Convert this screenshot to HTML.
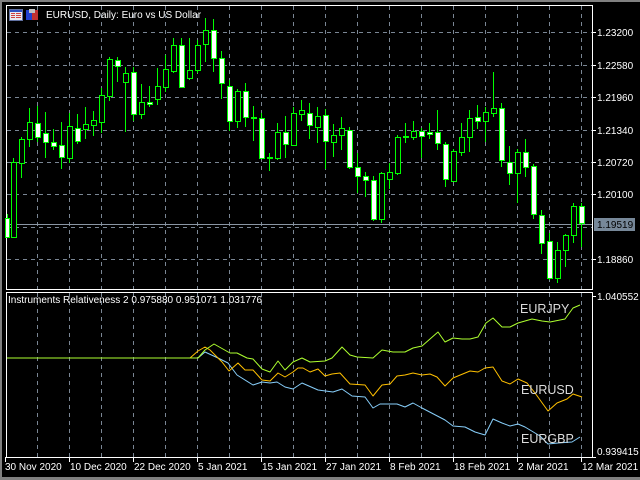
<!DOCTYPE html>
<html><head><meta charset="utf-8"><style>
html,body{margin:0;padding:0;background:#000;width:640px;height:480px;overflow:hidden}
svg{display:block}
text{font-family:"Liberation Sans",sans-serif;font-size:10px;fill:#fff}
</style></head><body>
<svg width="640" height="480" viewBox="0 0 640 480" xmlns="http://www.w3.org/2000/svg" shape-rendering="crispEdges">
<rect x="0" y="0" width="640" height="480" fill="#000"/>
<rect x="0" y="0" width="640" height="2" fill="#808080"/>
<rect x="0" y="0" width="2" height="480" fill="#808080"/>
<rect x="0" y="477" width="640" height="3" fill="#808080"/>
<g stroke="#7a8694" stroke-width="1" stroke-dasharray="4,4">
<path d="M37.5 6V289M69.5 6V289M101.5 6V289M133.5 6V289M165.5 6V289M197.5 6V289M229.5 6V289M261.5 6V289M293.5 6V289M325.5 6V289M357.5 6V289M389.5 6V289M421.5 6V289M453.5 6V289M485.5 6V289M517.5 6V289M549.5 6V289M581.5 6V289"/>
<path d="M37.5 293V457M69.5 293V457M101.5 293V457M133.5 293V457M165.5 293V457M197.5 293V457M229.5 293V457M261.5 293V457M293.5 293V457M325.5 293V457M357.5 293V457M389.5 293V457M421.5 293V457M453.5 293V457M485.5 293V457M517.5 293V457M549.5 293V457M581.5 293V457"/>
<path d="M7 32.5H592M7 65.5H592M7 97.5H592M7 130.5H592M7 162.5H592M7 194.5H592M7 227.5H592M7 259.5H592"/>
</g>
<path d="M7 224.5H592" stroke="#8a96a4" stroke-width="1"/>
<g stroke="#fff" stroke-width="1" fill="none">
<path d="M6.5 5.5H592.5V289.5H6.5Z"/>
<path d="M6.5 292.5H592.5V457.5H6.5Z"/>
<path d="M592 32.5h4M592 65.5h4M592 97.5h4M592 130.5h4M592 162.5h4M592 194.5h4M592 259.5h4M592 296.5h4"/>
<path d="M5.5 457V462M69.5 457V462M133.5 457V462M197.5 457V462M261.5 457V462M325.5 457V462M389.5 457V462M453.5 457V462M517.5 457V462M581.5 457V462"/>
<path d="M592.5 450V457.5H596"/>
</g>
<g stroke="#00ff00" stroke-width="1" shape-rendering="crispEdges">
<g fill="#000">
<path d="M13.5 158V238M21.5 137V178M29.5 108V147M69.5 113V163M85.5 107V139M93.5 111V136M101.5 88V133M109.5 57V101M125.5 67V132M141.5 84V119M157.5 68V105M165.5 55V92M173.5 38V73M189.5 38V80M197.5 40V73M205.5 18V62M237.5 89V128M277.5 123V160M293.5 107V146M301.5 100V121M317.5 107V143M333.5 124V157M341.5 117V150M381.5 172V223M389.5 163V189M397.5 135V175M413.5 121V140M453.5 149V182M461.5 123V156M469.5 110V152M485.5 107V142M493.5 72V117M517.5 149V203M557.5 242V283M565.5 234V267M573.5 203V243"/>
<rect x="11.5" y="162.5" width="5" height="75"/>
<rect x="19.5" y="139.5" width="5" height="24"/>
<rect x="27.5" y="122.5" width="5" height="17"/>
<rect x="67.5" y="126.5" width="5" height="32"/>
<rect x="83.5" y="124.5" width="5" height="5"/>
<rect x="91.5" y="120.5" width="5" height="5"/>
<rect x="99.5" y="95.5" width="5" height="27"/>
<rect x="107.5" y="59.5" width="5" height="37"/>
<rect x="123.5" y="73.5" width="5" height="9"/>
<rect x="139.5" y="102.5" width="5" height="12"/>
<rect x="155.5" y="86.5" width="5" height="13"/>
<rect x="163.5" y="69.5" width="5" height="18"/>
<rect x="171.5" y="45.5" width="5" height="26"/>
<rect x="187.5" y="70.5" width="5" height="8"/>
<rect x="195.5" y="45.5" width="5" height="25"/>
<rect x="203.5" y="30.5" width="5" height="14"/>
<rect x="235.5" y="91.5" width="5" height="30"/>
<rect x="275.5" y="132.5" width="5" height="26"/>
<rect x="291.5" y="113.5" width="5" height="32"/>
<rect x="299.5" y="110.5" width="5" height="4"/>
<rect x="315.5" y="116.5" width="5" height="11"/>
<rect x="331.5" y="135.5" width="5" height="7"/>
<rect x="339.5" y="128.5" width="5" height="7"/>
<rect x="379.5" y="173.5" width="5" height="46"/>
<rect x="387.5" y="172.5" width="5" height="7"/>
<rect x="395.5" y="137.5" width="5" height="36"/>
<rect x="411.5" y="131.5" width="5" height="6"/>
<rect x="451.5" y="151.5" width="5" height="30"/>
<rect x="459.5" y="137.5" width="5" height="15"/>
<rect x="467.5" y="118.5" width="5" height="19"/>
<rect x="483.5" y="112.5" width="5" height="9"/>
<rect x="491.5" y="108.5" width="5" height="5"/>
<rect x="515.5" y="152.5" width="5" height="21"/>
<rect x="555.5" y="250.5" width="5" height="28"/>
<rect x="563.5" y="235.5" width="5" height="15"/>
<rect x="571.5" y="206.5" width="5" height="29"/>
</g>
<g fill="#fff">
<path d="M7.5 214V238M37.5 106V142M45.5 112V158M53.5 129V150M61.5 122V169M77.5 114V144M117.5 57V82M133.5 67V121M149.5 86V107M181.5 38V88M213.5 19V72M221.5 51V99M229.5 80V131M245.5 83V127M253.5 106V141M261.5 113V158M269.5 153V171M285.5 116V158M309.5 103V139M325.5 109V169M349.5 127V169M357.5 153V193M365.5 172V197M373.5 176V221M405.5 123V143M421.5 128V158M429.5 123V139M437.5 110V150M445.5 142V187M477.5 105V129M501.5 103V167M509.5 146V185M525.5 139V177M533.5 164V219M541.5 210V254M549.5 233V280M581.5 203V247"/>
<rect x="5.5" y="218.5" width="4" height="19"/>
<rect x="35.5" y="123.5" width="5" height="14"/>
<rect x="43.5" y="133.5" width="5" height="9"/>
<rect x="51.5" y="142.5" width="5" height="4"/>
<rect x="59.5" y="145.5" width="5" height="12"/>
<rect x="75.5" y="128.5" width="5" height="13"/>
<rect x="115.5" y="60.5" width="5" height="6"/>
<rect x="131.5" y="72.5" width="5" height="42"/>
<rect x="147.5" y="102.5" width="5" height="2"/>
<rect x="179.5" y="45.5" width="5" height="42"/>
<rect x="211.5" y="30.5" width="5" height="28"/>
<rect x="219.5" y="58.5" width="5" height="25"/>
<rect x="227.5" y="86.5" width="5" height="35"/>
<rect x="243.5" y="91.5" width="5" height="26"/>
<rect x="251.5" y="117.5" width="5" height="1"/>
<rect x="259.5" y="118.5" width="5" height="40"/>
<rect x="267.5" y="157.5" width="5" height="1"/>
<rect x="283.5" y="132.5" width="5" height="12"/>
<rect x="307.5" y="113.5" width="5" height="12"/>
<rect x="323.5" y="115.5" width="5" height="26"/>
<rect x="347.5" y="130.5" width="5" height="37"/>
<rect x="355.5" y="167.5" width="5" height="9"/>
<rect x="363.5" y="176.5" width="5" height="4"/>
<rect x="371.5" y="180.5" width="5" height="39"/>
<rect x="403.5" y="136.5" width="5" height="1"/>
<rect x="419.5" y="131.5" width="5" height="5"/>
<rect x="427.5" y="132.5" width="5" height="2"/>
<rect x="435.5" y="132.5" width="5" height="11"/>
<rect x="443.5" y="144.5" width="5" height="35"/>
<rect x="475.5" y="117.5" width="5" height="4"/>
<rect x="499.5" y="108.5" width="5" height="52"/>
<rect x="507.5" y="162.5" width="5" height="11"/>
<rect x="523.5" y="152.5" width="5" height="15"/>
<rect x="531.5" y="166.5" width="5" height="48"/>
<rect x="539.5" y="215.5" width="5" height="28"/>
<rect x="547.5" y="241.5" width="5" height="37"/>
<rect x="579.5" y="206.5" width="5" height="17"/>
</g>
</g>
<g fill="none" stroke-width="1" shape-rendering="auto" stroke-linejoin="round">
<polyline stroke="#87cefa" points="198,358 205,352 218,358 228,363 237,375 253,385 262,382 270,383 277,382 285,387 293,389 302,383 318,390 333,392 342,389 352,396 365,397 373,408 380,404 397,404 405,407 413,403 422,408 445,420 453,426 465,427 475,432 485,435 493,419 502,423 510,426 518,424 525,427 540,436 548,444 558,443 572,442 580,437"/>
<polyline stroke="#ffc000" points="190,358 198,351 205,347 210,350 222,362 229,371 238,363 245,370 253,370 262,380 270,381 278,373 285,377 293,372 298,368 303,368 310,372 318,369 325,376 332,374 340,373 350,384 365,385 373,396 382,385 390,384 397,376 405,375 413,373 422,375 430,374 437,377 445,386 453,378 470,371 478,372 485,368 493,367 502,381 510,384 518,379 527,383 535,393 548,411 557,403 567,399 573,394 582,397"/>
<polyline stroke="#adff2f" points="7,358 198,358 205,350 214,344 230,353 237,353 247,358 253,359 262,369 270,372 278,361 285,370 293,362 302,358 310,362 325,361 332,358 342,347 350,355 357,357 373,358 382,350 393,352 405,352 413,348 422,346 438,332 445,342 453,338 462,339 470,339 478,337 486,323 493,318 502,327 510,327 518,323 532,319 542,321 550,322 565,319 573,308 580,305"/>
</g>
<text x="520" y="313" style="font-size:12.5px;fill:#dcdcdc">EURJPY</text>
<text x="521" y="394" style="font-size:12.5px;fill:#dcdcdc">EURUSD</text>
<text x="521" y="443" style="font-size:12.5px;fill:#dcdcdc">EURGBP</text>
<rect x="9.5" y="9.5" width="13" height="11" fill="#e8e8f0" stroke="#6070a0"/>
<rect x="10" y="10" width="12" height="2" fill="#3050c0"/>
<path d="M11 13.5h4M11 15.5h4M11 17.5h4M16 13.5h5M16 15.5h5M16 17.5h5" stroke="#d04040"/>
<rect x="26" y="10" width="6" height="10" fill="#2040d0"/>
<rect x="32" y="10" width="6" height="10" fill="#c03030"/>
<rect x="29" y="9" width="6" height="4" fill="#c0c0c0"/>
<text x="46" y="18">EURUSD, Daily:  Euro vs US Dollar</text>
<text x="8" y="303">Instruments Relativeness 2 0.975880 0.951071 1.031776</text>
<text x="597" y="36">1.23200</text>
<text x="597" y="69">1.22580</text>
<text x="597" y="101">1.21960</text>
<text x="597" y="134">1.21340</text>
<text x="597" y="166">1.20720</text>
<text x="597" y="198">1.20100</text>
<rect x="594" y="218" width="41" height="13" fill="#778899"/>
<text x="597" y="228" style="fill:#000">1.19519</text>
<text x="597" y="263">1.18860</text>
<text x="597" y="300">1.040552</text>
<text x="597" y="455">0.939415</text>
<text x="5" y="470">30 Nov 2020</text>
<text x="70" y="470">10 Dec 2020</text>
<text x="134" y="470">22 Dec 2020</text>
<text x="198" y="470">5 Jan 2021</text>
<text x="262" y="470">15 Jan 2021</text>
<text x="326" y="470">27 Jan 2021</text>
<text x="390" y="470">8 Feb 2021</text>
<text x="454" y="470">18 Feb 2021</text>
<text x="518" y="470">2 Mar 2021</text>
<text x="582" y="470">12 Mar 2021</text>
</svg>
</body></html>
